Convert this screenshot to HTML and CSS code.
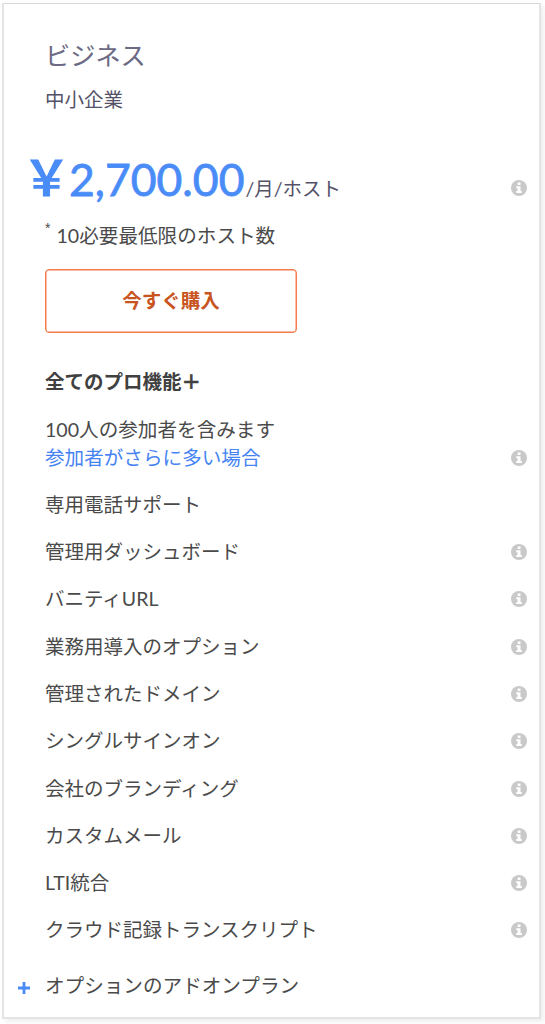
FILE: index.html
```html
<!DOCTYPE html>
<html lang="ja">
<head>
<meta charset="utf-8">
<title>ビジネス</title>
<link rel="stylesheet" href="styles.css">
</head>
<body>
<svg class="defs" width="0" height="0">
  <symbol id="info" viewBox="0 0 16 16">
    <circle cx="8" cy="8" r="8" fill="#c9c9c9"/>
    <path d="M6.7 2.4h2.8v2.5H6.7zM5.3 6.2h4.2v4.8h1.3v2H5.3v-2h1.3V8.2H5.3z" fill="#fff"/>
  </symbol>
</svg>
<main class="card">
  <h1 class="name">ビジネス</h1>
  <p class="audience">中小企業</p>
  <div class="price">
    <span class="yen">￥</span><span class="amount">2,700.00</span><span class="unit">/月/ホスト</span>
    <svg class="info"><use href="#info"/></svg>
  </div>
  <p class="minimum"><span class="star">*</span>10必要最低限のホスト数</p>
  <button class="buy">今すぐ購入</button>
  <h2 class="heading">全てのプロ機能<span class="and">＋</span></h2>
  <ul class="features">
    <li class="tall"><span>100人の参加者を含みます<br><a class="more">参加者がさらに多い場合</a></span><svg class="info"><use href="#info"/></svg></li>
    <li><span>専用電話サポート</span></li>
    <li><span>管理用ダッシュボード</span><svg class="info"><use href="#info"/></svg></li>
    <li><span>バニティURL</span><svg class="info"><use href="#info"/></svg></li>
    <li><span>業務用導入のオプション</span><svg class="info"><use href="#info"/></svg></li>
    <li><span>管理されたドメイン</span><svg class="info"><use href="#info"/></svg></li>
    <li><span>シングルサインオン</span><svg class="info"><use href="#info"/></svg></li>
    <li><span>会社のブランディング</span><svg class="info"><use href="#info"/></svg></li>
    <li><span>カスタムメール</span><svg class="info"><use href="#info"/></svg></li>
    <li><span>LTI統合</span><svg class="info"><use href="#info"/></svg></li>
    <li><span>クラウド記録トランスクリプト</span><svg class="info"><use href="#info"/></svg></li>
  </ul>
  <div class="addons">
    <svg class="plus" viewBox="0 0 12 12"><path d="M6 0v12M0 6h12" stroke="#4a8cf7" stroke-width="2.8"/></svg>
    <span>オプションのアドオンプラン</span>
  </div>
</main>
</body>
</html>
```
FILE: styles.css
```css
* { box-sizing: border-box; }
body {
  margin: 0;
  padding: 3px 4px 5px 2px;
  background: #fefefe;
  font: 19.5px/28px Lato, "Noto Sans CJK JP", sans-serif;
  color: #4a4a4a;
}
h1, h2, p, ul { margin: 0; padding: 0; font-weight: 400; }
.defs { display: block; height: 0; }
.card {
  height: 1016px;
  padding: 31px 12px 0 41px;
  border: 2px solid #e4e4e4;
  border-top: 1px solid #d8d8d8;
  background: #fff;
  box-shadow: 3px 3px 4px rgba(0, 0, 0, .06);
}
.name { height: 40px; font-size: 25.2px; line-height: 40px; color: #6c6a84; }
.audience { margin-top: 11px; color: #545268; }
.price { display: flex; align-items: baseline; height: 70px; margin: 26px 0 0 -23px; line-height: 70px; }
.yen { width: 47px; font: 700 49px/70px "Noto Sans CJK JP", sans-serif; color: #4a8cf7; }
.amount { font-size: 44.5px; -webkit-text-stroke: .8px #4a8cf7; color: #4a8cf7; }
.unit { margin-left: 1px; color: #545268; }
.info { flex: none; width: 16px; height: 16px; margin-left: auto; }
.minimum { display: flex; height: 28px; margin-top: 12px; font-size: 19.6px; }
.star { width: 11.5px; font: 14px/13px "Liberation Sans", sans-serif; }
.buy {
  display: block;
  width: 252px;
  height: 64px;
  margin-top: 19px;
  padding: 0;
  border: 1px solid #f47c4c;
  box-shadow: inset 0 0 0 .5px #f47c4c;
  border-radius: 4px;
  background: #fff;
  color: #c8551f;
  font: 700 19.5px/28px Lato, "Noto Sans CJK JP", sans-serif;
}
.heading { margin-top: 35px; font-size: 19.5px; font-weight: 700; color: #404040; }
.and { -webkit-text-stroke: .5px #404040; }
.features { margin-top: 10px; list-style: none; }
.features li { display: flex; align-items: center; height: 47.28px; }
.features .tall { height: 75.3px; font-size: 19.6px; }
.tall .info { margin-top: 28px; }
.more { color: #4583f3; }
.addons { display: flex; align-items: center; height: 28px; margin: 18px 0 0 -27px; font-size: 19.6px; }
.plus { width: 12px; height: 12px; margin: 4px 15px 0 0; }
```
